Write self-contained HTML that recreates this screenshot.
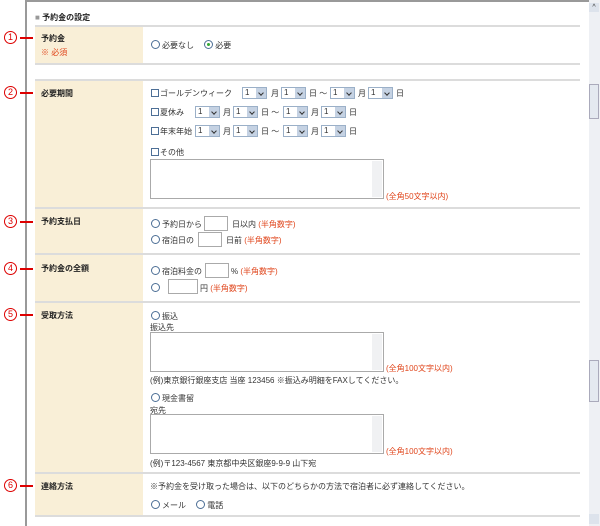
<!DOCTYPE html>
<html><head><meta charset="utf-8"><style>
*{margin:0;padding:0;box-sizing:border-box}
body{width:600px;height:526px;background:#fff;position:relative;overflow:hidden;font-family:"Liberation Sans","Noto Sans CJK JP",sans-serif;font-size:8px;color:#333}
.a{position:absolute;white-space:nowrap}
.lab{position:absolute;left:35px;width:108px;background:#f9efd7}
.hl{position:absolute;left:35px;width:545px;height:2px;background:#dcdcdc}
.b{font-weight:bold;color:#222}
.num{position:absolute;left:4px;width:13px;height:13px;border:1px solid #d00;border-radius:50%;color:#d00;font-size:9px;line-height:11px;text-align:center}
.rl{position:absolute;left:20px;width:13px;height:2px;background:#d00}
.sel{position:absolute;width:25px;height:12px;border:1px solid #9bb0c8;background:#fff;font-size:8px;line-height:10px;padding-left:2px}
.sel:after{content:"";position:absolute;right:0;top:0;width:10px;height:10px;background:#c5d2e3}
.sel:before{content:"";position:absolute;right:3px;top:3px;width:3px;height:3px;border-right:1.5px solid #333;border-bottom:1.5px solid #333;transform:rotate(45deg);z-index:2}
.cb{display:inline-block;width:8px;height:8px;border:1px solid #4d6f96;vertical-align:-1px;margin-right:1px}
.rd{display:inline-block;width:9px;height:9px;border:1px solid #4d6f96;border-radius:50%;vertical-align:-1px;margin-right:2px;position:relative}
.rd.on:after{content:"";position:absolute;left:2px;top:2px;width:3px;height:3px;border-radius:50%;background:#3a3}
.ta{position:absolute;left:150px;width:234px;border:1px solid #aaa;background:#fff}
.ta:after{content:"";position:absolute;right:1px;top:1px;bottom:1px;width:10px;background:#f0f1f3}
.in{position:absolute;height:15px;border:1px solid #aaa;background:#fff}
.r{color:#e0461c}
</style></head><body>
<div class="a" style="left:25px;top:0;width:565px;height:2px;background:#999"></div>
<div class="a" style="left:25px;top:0;width:2px;height:526px;background:#999"></div>
<div class="a" style="left:589px;top:0;width:11px;height:526px;background:#eef0f4"></div>
<div class="a" style="left:589px;top:3px;width:10px;height:9px;background:#dde3ec;font-size:7px;text-align:center;line-height:9px">^</div>
<div class="a" style="left:589px;top:84px;width:10px;height:35px;border:1px solid #aab;background:#e4e9f0"></div>
<div class="a" style="left:589px;top:360px;width:10px;height:42px;border:1px solid #aab;background:#e4e9f0"></div>
<div class="a" style="left:589px;top:514px;width:10px;height:10px;background:#dde3ec"></div>

<div class="a b" style="left:35px;top:12px;font-size:8px"><span style="color:#999">■</span> 予約金の設定</div>

<div class="hl" style="top:25px"></div>
<div class="lab" style="top:27px;height:37px"></div>
<div class="hl" style="top:63px"></div>
<div class="hl" style="top:79px"></div>
<div class="lab" style="top:81px;height:127px"></div>
<div class="hl" style="top:207px"></div>
<div class="lab" style="top:209px;height:45px"></div>
<div class="hl" style="top:253px"></div>
<div class="lab" style="top:255px;height:47px"></div>
<div class="hl" style="top:301px"></div>
<div class="lab" style="top:303px;height:169px"></div>
<div class="hl" style="top:472px"></div>
<div class="lab" style="top:474px;height:41px"></div>
<div class="hl" style="top:515px"></div>

<div class="num" style="top:31px">1</div><div class="rl" style="top:37px"></div>
<div class="num" style="top:86px">2</div><div class="rl" style="top:92px"></div>
<div class="num" style="top:215px">3</div><div class="rl" style="top:221px"></div>
<div class="num" style="top:262px">4</div><div class="rl" style="top:268px"></div>
<div class="num" style="top:308px">5</div><div class="rl" style="top:314px"></div>
<div class="num" style="top:479px">6</div><div class="rl" style="top:485px"></div>

<div class="a b" style="left:41px;top:33px">予約金</div>
<div class="a r" style="left:41px;top:47px">※ 必須</div>
<div class="a" style="left:151px;top:40px"><span class="rd"></span>必要なし　 <span class="rd on"></span>必要</div>

<div class="a b" style="left:41px;top:88px">必要期間</div>
<div class="a" style="left:151px;top:88px"><span class="cb"></span>ゴールデンウィーク</div>
<div class="sel" style="left:242px;top:87px">1</div><div class="a" style="left:271px;top:88px">月</div>
<div class="sel" style="left:281px;top:87px">1</div><div class="a" style="left:309px;top:88px">日 ～</div>
<div class="sel" style="left:330px;top:87px">1</div><div class="a" style="left:358px;top:88px">月</div>
<div class="sel" style="left:368px;top:87px">1</div><div class="a" style="left:396px;top:88px">日</div>

<div class="a" style="left:151px;top:107px"><span class="cb"></span>夏休み</div>
<div class="sel" style="left:195px;top:106px">1</div><div class="a" style="left:223px;top:107px">月</div>
<div class="sel" style="left:233px;top:106px">1</div><div class="a" style="left:261px;top:107px">日 ～</div>
<div class="sel" style="left:283px;top:106px">1</div><div class="a" style="left:311px;top:107px">月</div>
<div class="sel" style="left:321px;top:106px">1</div><div class="a" style="left:349px;top:107px">日</div>

<div class="a" style="left:151px;top:126px"><span class="cb"></span>年末年始</div>
<div class="sel" style="left:195px;top:125px">1</div><div class="a" style="left:223px;top:126px">月</div>
<div class="sel" style="left:233px;top:125px">1</div><div class="a" style="left:261px;top:126px">日 ～</div>
<div class="sel" style="left:283px;top:125px">1</div><div class="a" style="left:311px;top:126px">月</div>
<div class="sel" style="left:321px;top:125px">1</div><div class="a" style="left:349px;top:126px">日</div>

<div class="a" style="left:151px;top:147px"><span class="cb"></span>その他</div>
<div class="ta" style="top:159px;height:40px"></div>
<div class="a r" style="left:386px;top:191px">(全角50文字以内)</div>

<div class="a b" style="left:41px;top:216px">予約支払日</div>
<div class="a" style="left:151px;top:219px"><span class="rd"></span>予約日から</div>
<div class="in" style="left:204px;top:216px;width:24px"></div>
<div class="a" style="left:232px;top:219px">日以内 <span class="r">(半角数字)</span></div>
<div class="a" style="left:151px;top:235px"><span class="rd"></span>宿泊日の</div>
<div class="in" style="left:198px;top:232px;width:24px"></div>
<div class="a" style="left:226px;top:235px">日前 <span class="r">(半角数字)</span></div>

<div class="a b" style="left:41px;top:263px">予約金の全額</div>
<div class="a" style="left:151px;top:266px"><span class="rd"></span>宿泊料金の</div>
<div class="in" style="left:205px;top:263px;width:24px"></div>
<div class="a" style="left:231px;top:266px">% <span class="r">(半角数字)</span></div>
<div class="a" style="left:151px;top:283px"><span class="rd"></span></div>
<div class="in" style="left:168px;top:279px;width:30px"></div>
<div class="a" style="left:200px;top:283px">円 <span class="r">(半角数字)</span></div>

<div class="a b" style="left:41px;top:310px">受取方法</div>
<div class="a" style="left:151px;top:311px"><span class="rd"></span>振込</div>
<div class="a" style="left:150px;top:322px">振込先</div>
<div class="ta" style="top:332px;height:40px"></div>
<div class="a r" style="left:386px;top:363px">(全角100文字以内)</div>
<div class="a" style="left:150px;top:375px">(例)東京銀行銀座支店 当座 123456 ※振込み明細をFAXしてください。</div>
<div class="a" style="left:151px;top:393px"><span class="rd"></span>現金書留</div>
<div class="a" style="left:150px;top:405px">宛先</div>
<div class="ta" style="top:414px;height:40px"></div>
<div class="a r" style="left:386px;top:446px">(全角100文字以内)</div>
<div class="a" style="left:150px;top:458px">(例)〒123-4567 東京都中央区銀座9-9-9 山下宛</div>

<div class="a b" style="left:41px;top:481px">連絡方法</div>
<div class="a" style="left:150px;top:481px">※予約金を受け取った場合は、以下のどちらかの方法で宿泊者に必ず連絡してください。</div>
<div class="a" style="left:151px;top:500px"><span class="rd"></span>メール　 <span class="rd"></span>電話</div>
</body></html>
